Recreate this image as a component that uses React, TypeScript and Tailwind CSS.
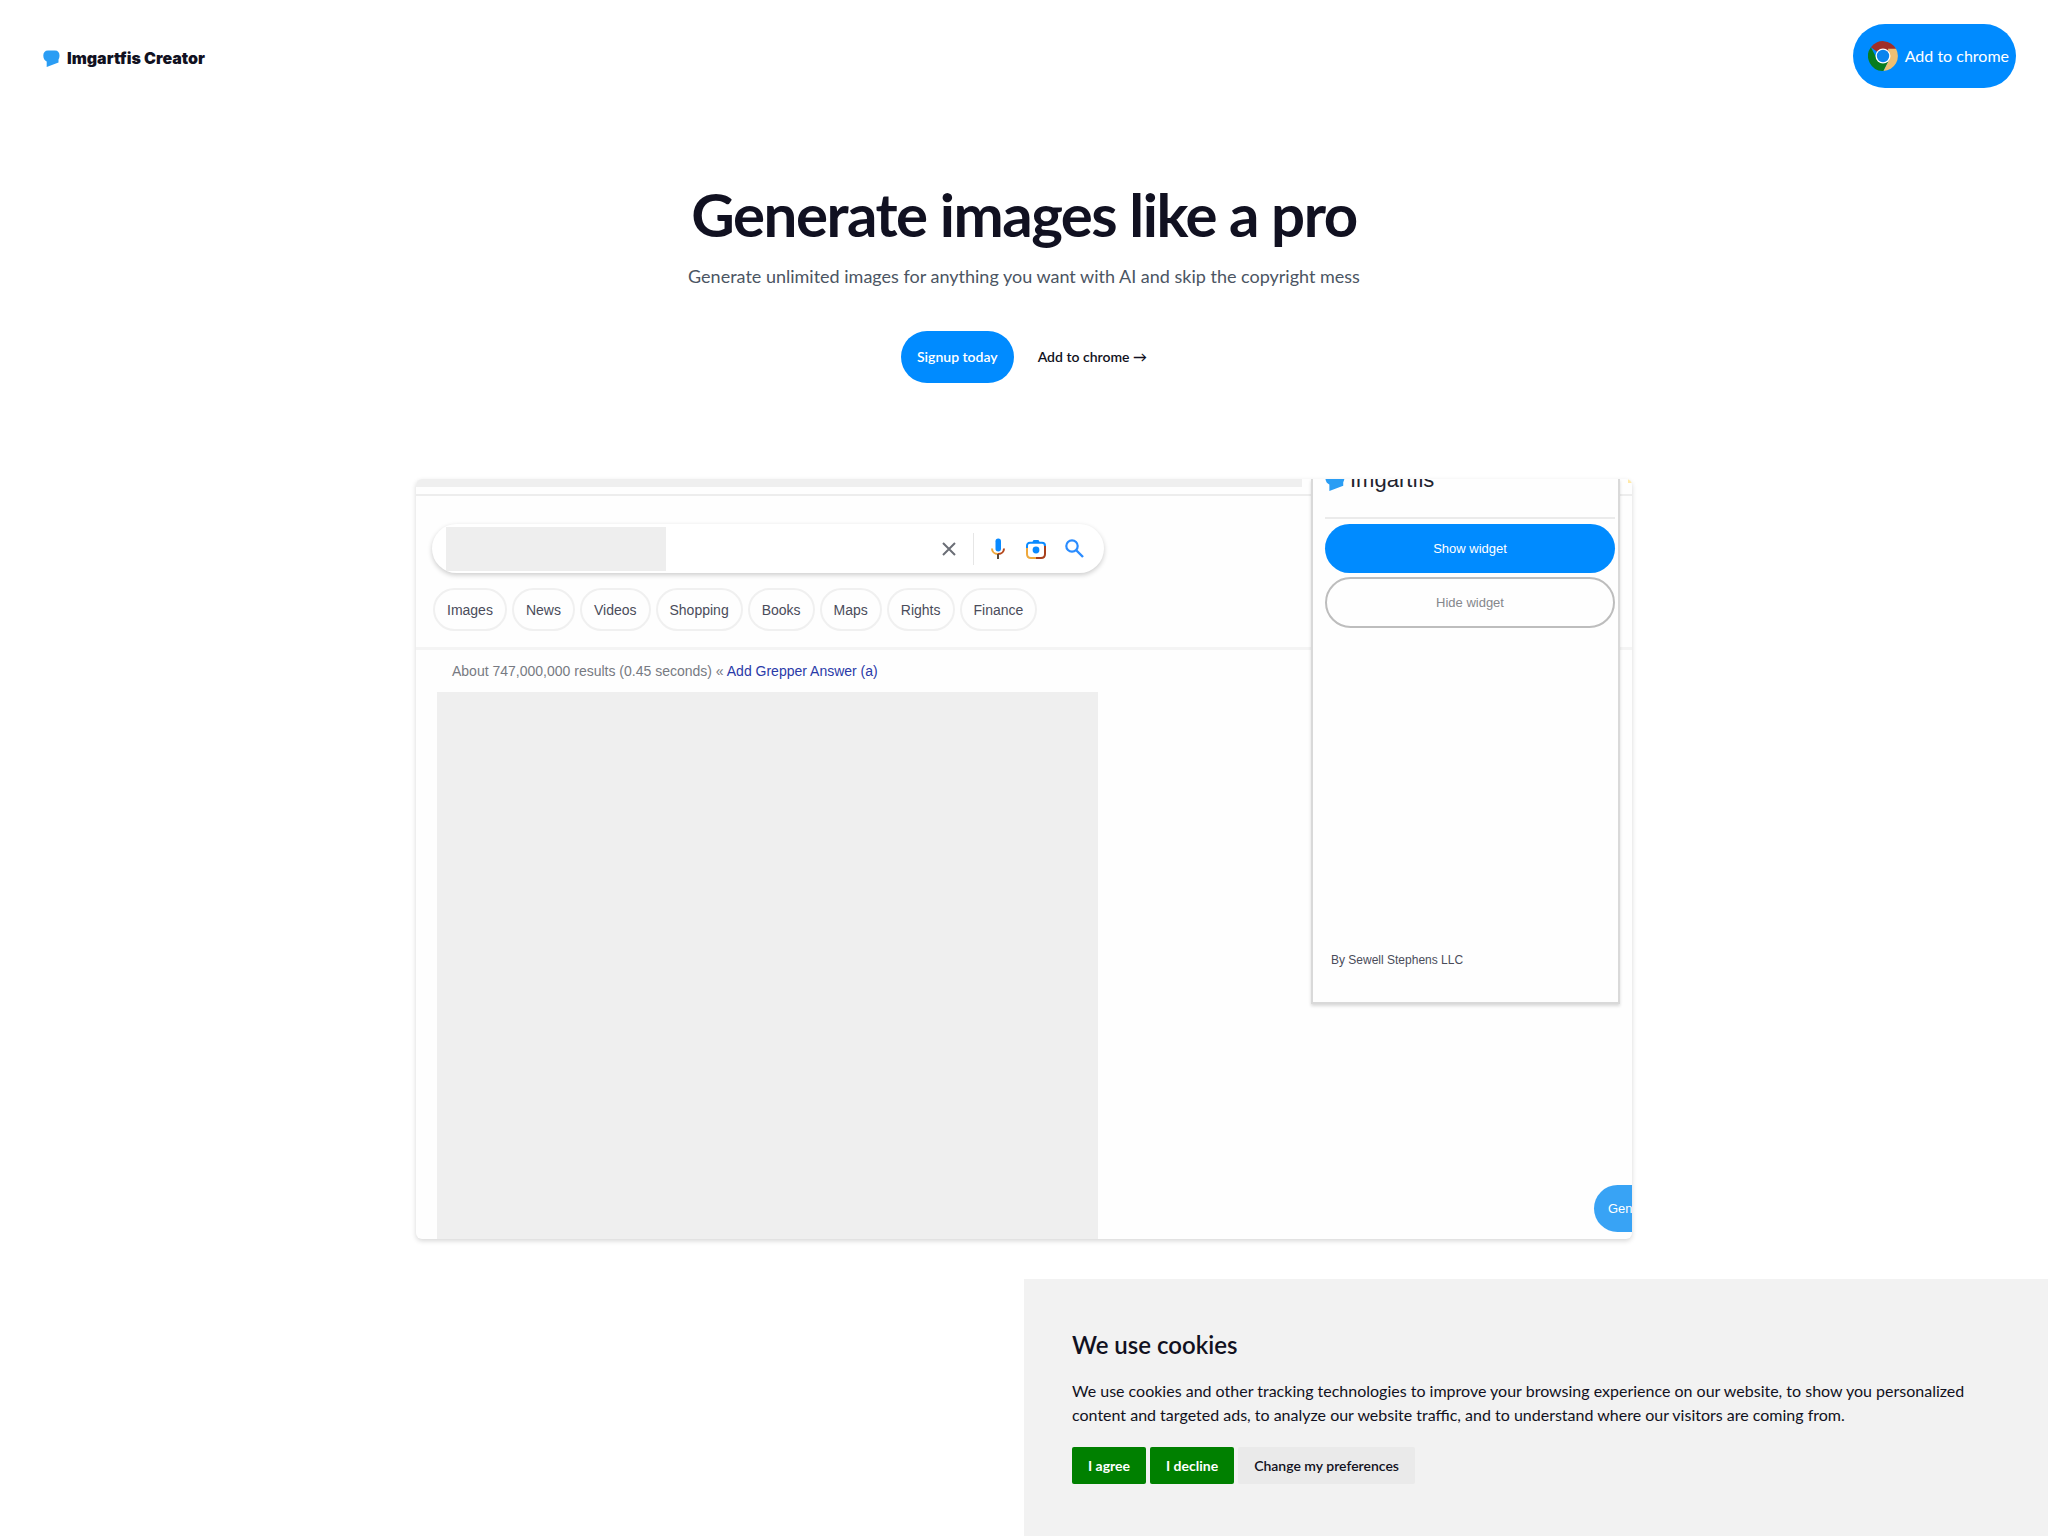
import { ReactNode } from "react";

const chips = ["Images", "News", "Videos", "Shopping", "Books", "Maps", "Rights", "Finance"];

function Bubble({ className }: { className: string }) {
  return (
    <svg viewBox="0 0 17 17" className={className} aria-hidden="true">
      <path
        d="M5 0.500H12C15 0.500 16.500 2.500 16.500 5.500C16.500 7.500 16 8.500 15.500 9.500V12.500L3.700 16.900V11.500C1.500 10.500 0.300 8.500 0.300 5.500C0.300 2.500 2 0.500 5 0.500Z"
        fill="#2a9df4"
      />
    </svg>
  );
}

function ChromeIcon() {
  return (
    <svg viewBox="0 0 30 30" className="size-[30px]" aria-hidden="true">
      <path d="M15 15 2.900 6.200A15 15 0 0 1 28 7.700z" fill="#a02f28" />
      <path d="M2.900 6.200A15 15 0 0 0 15.500 30L21 19 15 15 8 16z" fill="#087c1e" />
      <path d="M28 7.700A15 15 0 0 1 15.500 30L21.500 18 20 7.700z" fill="#eebf72" />
      <circle cx="15" cy="15" r="7.500" fill="#fff" />
      <circle cx="15" cy="15" r="6.200" fill="#0a84ee" />
    </svg>
  );
}

function MicIcon() {
  return (
    <svg viewBox="0 0 14 22" className="h-[22px] w-[14px]" fill="none" aria-hidden="true">
      <rect x="4.500" y="0.500" width="5.500" height="13" rx="2.700" fill="#0a8aff" />
      <path d="M1 10.500c0 3 2.200 5.500 6 5.500" stroke="#eea83c" strokeWidth="2" />
      <path d="M7 16c3.800 0 6-2.500 6-5.500" stroke="#b5481c" strokeWidth="2" />
      <path d="M7 16v5" stroke="#5a4a3a" strokeWidth="2" />
    </svg>
  );
}

function LensIcon() {
  return (
    <svg viewBox="0 0 20 20" className="size-5" fill="none" aria-hidden="true">
      <path d="M1 9V7c0-2 1-3.200 3-3.200h12c2 0 3 1.200 3 3.200" stroke="#0a8aff" strokeWidth="2" />
      <path d="M6 3.800 7.500 1h5L14 3.800z" fill="#0a8aff" />
      <path d="M1 9v6c0 2.500 1.500 4 4 4h5" stroke="#eea83c" strokeWidth="2" />
      <path d="M19 7v8c0 2.500-1.500 4-4 4h-5" stroke="#a8401c" strokeWidth="2" />
      <circle cx="10" cy="11" r="3.400" fill="#0a8aff" />
    </svg>
  );
}

function SearchIcon() {
  return (
    <svg viewBox="0 0 19 19" className="size-[19px]" fill="none" stroke="#2a8cff" aria-hidden="true">
      <circle cx="7" cy="7" r="5.700" strokeWidth="2.200" />
      <path d="m11 11 7 7" strokeWidth="2.400" />
    </svg>
  );
}

function IconButton({ label, children }: { label: string; children: ReactNode }) {
  return (
    <button type="button" aria-label={label} className="flex w-5 items-center justify-center">
      {children}
    </button>
  );
}

function SearchPreview() {
  return (
    <div className="relative flex aspect-[8/5] flex-col overflow-hidden rounded-md bg-[#fefefe] font-['Liberation_Sans',sans-serif] shadow-[0_2px_5px_rgba(0,0,0,0.16)]">
      <div className="mr-[330px] h-2 shrink-0 bg-[#efefef]" />
      <div className="mt-[7px] h-[2px] shrink-0 bg-[#ededed]" />

      <div className="ml-4 mt-7 flex h-[49px] w-[672px] shrink-0 items-center rounded-full bg-white pl-[14px] pr-5 shadow-[0_2px_5px_rgba(0,0,0,0.2)]">
        <div className="h-[44px] w-[220px] bg-[#eeeeee]" />
        <div className="ml-auto flex items-center gap-[18px]">
          <IconButton label="Clear">
            <svg viewBox="0 0 14 14" className="size-[14px]" stroke="#6b6e76" strokeWidth="2" aria-hidden="true">
              <path d="m1 1 12 12M13 1 1 13" />
            </svg>
          </IconButton>
          <div className="-mx-1 h-8 w-px bg-[#e6e6e6]" />
          <IconButton label="Search by voice"><MicIcon /></IconButton>
          <IconButton label="Search by image"><LensIcon /></IconButton>
          <IconButton label="Search"><SearchIcon /></IconButton>
        </div>
      </div>

      <div className="ml-[17px] mt-[15px] flex shrink-0 gap-[5px]">
        {chips.map((chip) => (
          <button
            key={chip}
            type="button"
            className="h-[43px] rounded-full border-2 border-[#f0f0f0] px-3 text-sm text-[#4a4c5a]"
          >
            {chip}
          </button>
        ))}
      </div>
      <div className="mt-4 h-[3px] shrink-0 bg-[#f4f4f4]" />

      <p className="ml-9 mt-[11px] shrink-0 text-sm leading-5 text-[#777a82]">
        About 747,000,000 results (0.45 seconds) «{" "}
        <a href="#" className="text-[#2a3aa8]">Add Grepper Answer (a)</a>
      </p>
      <div className="ml-[21px] mt-[11px] w-[661px] grow bg-[#efefef]" />

      {/* extension popup */}
      <div className="absolute right-3 top-0 flex h-[525px] w-[309px] flex-col border-x-2 border-b-2 border-[#d9d9d9] bg-[#fefefe] pl-3 pr-[3px] shadow-[0_2px_3px_rgba(0,0,0,0.15)]">
        <div className="-mt-3 flex h-[52px] items-start gap-[5px] border-b-2 border-[#ebebeb]">
          <Bubble className="mt-1 size-5" />
          <span className="text-[22px] leading-[26px] font-medium text-[#22232e]">Imgartfis</span>
        </div>
        <button type="button" className="mt-[5px] h-[49px] shrink-0 rounded-full bg-[#008bff] text-[13px] text-white">
          Show widget
        </button>
        <button type="button" className="mt-1 h-[51px] shrink-0 rounded-full border-2 border-[#bdbdbd] text-[13px] text-[#85878c]">
          Hide widget
        </button>
        <p className="mb-8 ml-[6px] mt-auto text-xs leading-5 text-[#4a4c5a]">By Sewell Stephens LLC</p>
      </div>

      <div className="absolute right-0 top-0 size-1 bg-[#ffe9a8]" />

      <button
        type="button"
        className="absolute -right-16 bottom-[7px] h-[47px] w-[102px] rounded-full bg-[#38a3f5] pl-[14px] text-left text-[13px] text-white"
      >
        Generate
      </button>
    </div>
  );
}

function CookieNotice() {
  return (
    <section
      aria-labelledby="cookie-title"
      className="fixed bottom-0 right-0 w-1/2 bg-[#f2f2f2] p-12 pb-[52px] text-[#111121]"
    >
      <h2 id="cookie-title" className="text-2xl leading-9 font-semibold">We use cookies</h2>
      <p className="mt-4 text-base leading-6">
        We use cookies and other tracking technologies to improve your browsing experience on our website, to show you
        personalized content and targeted ads, to analyze our website traffic, and to understand where our visitors are
        coming from.
      </p>
      <div className="mt-5 flex gap-1 text-sm">
        <button type="button" className="h-[37px] rounded-xs bg-[#008000] px-4 font-bold text-white">I agree</button>
        <button type="button" className="h-[37px] rounded-xs bg-[#008000] px-4 font-bold text-white">I decline</button>
        <button type="button" className="h-[37px] rounded-xs bg-[#eaeaea] px-4 font-semibold">
          Change my preferences
        </button>
      </div>
    </section>
  );
}

export default function App() {
  return (
    <div className="min-h-screen bg-white font-['Lato',sans-serif] text-[#111121]">
      <header className="flex items-center justify-between px-8 py-6">
        <a href="#" className="ml-[11px] flex items-center gap-[7px] pt-1">
          <Bubble className="size-[17px]" />
          <span className="font-['Inter','Liberation_Sans',sans-serif] text-base leading-6 font-black">
            Imgartfis Creator
          </span>
        </a>
        <a href="#" className="flex h-16 items-center gap-[7px] rounded-full bg-[#008bff] pl-[15px] pr-[7px] text-base text-white">
          <ChromeIcon />
          Add to chrome
        </a>
      </header>

      <main className="mx-auto max-w-7xl px-8 pt-18 pb-24">
        <div className="text-center">
          <h1 className="text-6xl leading-none font-bold tracking-tight">Generate images like a pro</h1>
          <p className="mt-4 text-lg leading-8 text-[#4b5563]">
            Generate unlimited images for anything you want with AI and skip the copyright mess
          </p>
          <div className="mt-[39px] flex items-center justify-center gap-6 text-sm font-semibold">
            <a href="#" className="flex h-[52px] items-center rounded-full bg-[#008bff] px-4 text-white">
              Signup today
            </a>
            <a href="#">Add to chrome →</a>
          </div>
        </div>
        <div className="mt-24">
          <SearchPreview />
        </div>
      </main>

      <CookieNotice />
    </div>
  );
}
